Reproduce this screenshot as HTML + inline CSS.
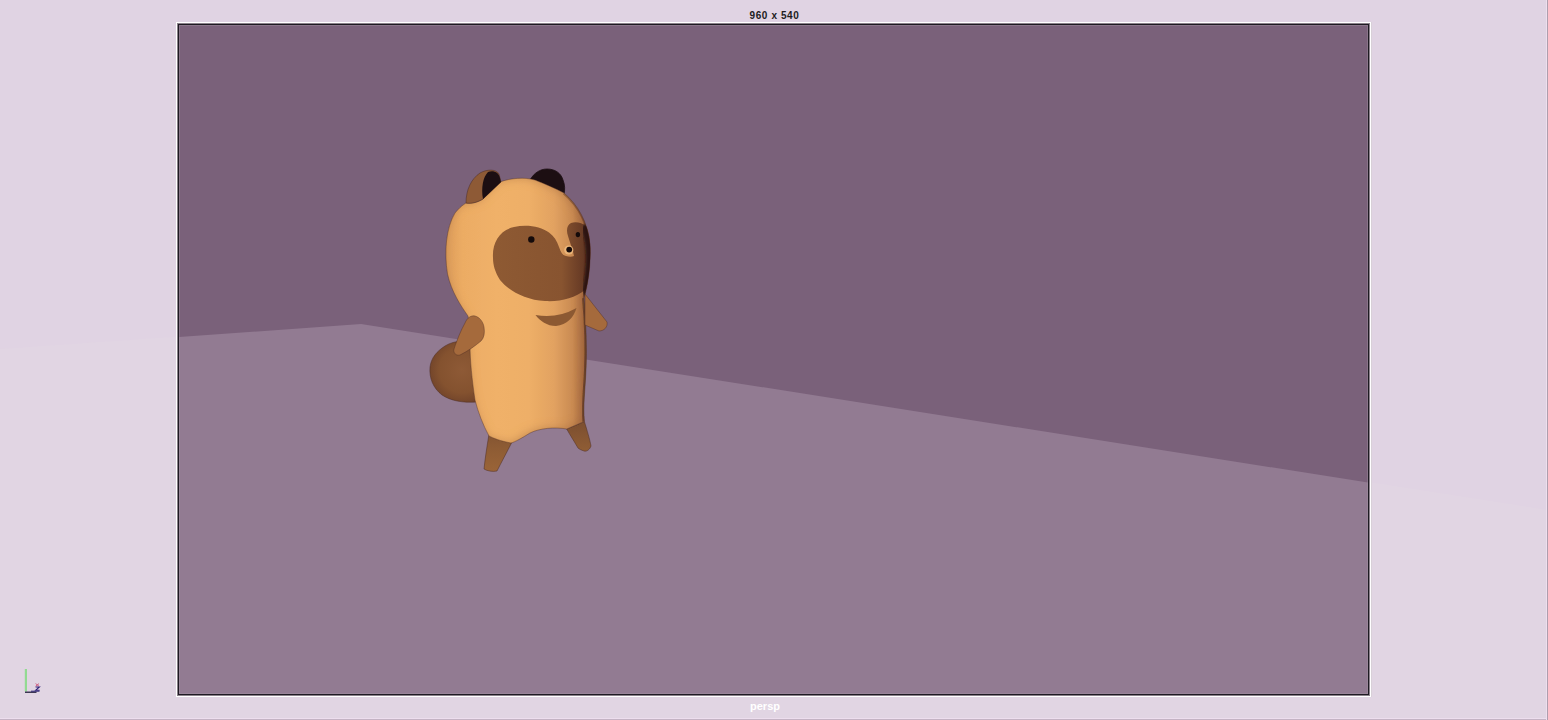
<!DOCTYPE html>
<html>
<head>
<meta charset="utf-8">
<style>
html,body{margin:0;padding:0;width:1548px;height:720px;overflow:hidden;background:#E0D3E3;}
svg{display:block;position:absolute;left:0;top:0;}
.lbl{font-family:"Liberation Sans",sans-serif;font-weight:bold;font-size:11px;}
</style>
</head>
<body>
<svg width="1548" height="720" viewBox="0 0 1548 720">
  <defs>
    <linearGradient id="gSkin" x1="445" y1="0" x2="592" y2="0" gradientUnits="userSpaceOnUse">
      <stop offset="0" stop-color="#DC9C5A"/>
      <stop offset="0.12" stop-color="#ECAC64"/>
      <stop offset="0.35" stop-color="#F0B169"/>
      <stop offset="0.57" stop-color="#EEAF67"/>
      <stop offset="0.74" stop-color="#E2A261"/>
      <stop offset="0.87" stop-color="#C98A52"/>
      <stop offset="0.94" stop-color="#A86C42"/>
      <stop offset="1" stop-color="#7A4630"/>
    </linearGradient>
    <linearGradient id="gPatch" x1="493" y1="0" x2="591" y2="0" gradientUnits="userSpaceOnUse">
      <stop offset="0" stop-color="#8E5A33"/>
      <stop offset="0.7" stop-color="#885430"/>
      <stop offset="1" stop-color="#5A3020"/>
    </linearGradient>
    <radialGradient id="gTail" cx="462" cy="370" r="38" gradientUnits="userSpaceOnUse">
      <stop offset="0" stop-color="#8E5A36"/>
      <stop offset="0.6" stop-color="#84522F"/>
      <stop offset="1" stop-color="#6A3E28"/>
    </radialGradient>
    <filter id="inner" x="-10%" y="-10%" width="120%" height="120%">
      <feGaussianBlur in="SourceAlpha" stdDeviation="5" result="b"/>
      <feOffset in="b" dx="-2" dy="0" result="o"/>
      <feComposite in="SourceAlpha" in2="o" operator="out" result="rim"/>
      <feFlood flood-color="#9A6038" flood-opacity="0.55" result="f"/>
      <feComposite in="f" in2="rim" operator="in" result="shadow"/>
      <feMerge><feMergeNode in="SourceGraphic"/><feMergeNode in="shadow"/></feMerge>
    </filter>
    <clipPath id="clipSil"><path d="M483,199 C490,192 496,186 500,182 C510,178 525,177 535,180 C545,184 555,188 564,193 C578,205 588,222 590,245 C591,265 588,285 584,298 C586,320 587,350 586,370 C585,392 583,405 584.4,421.5 L566.7,429 C555,427 540,428 530,433 C522,438 515,442 511,443 C500,441 493,438 489,436 C483,425 478,412 475,400 C472,380 470,360 470,345 C470,330 469,322 468,316 C461,306 451.5,292 447.5,274 C444,252 446,228 455,213 C460,207 463,205 466,203 C472,204 478,202 483,199 Z"/></clipPath>
    <linearGradient id="gLeg" x1="0" y1="425" x2="0" y2="472" gradientUnits="userSpaceOnUse">
      <stop offset="0" stop-color="#7E5030"/>
      <stop offset="0.5" stop-color="#8E5C34"/>
      <stop offset="1" stop-color="#9A6438"/>
    </linearGradient>
    <filter id="soft" x="-50%" y="-50%" width="200%" height="200%"><feGaussianBlur stdDeviation="1.2"/></filter>
    <filter id="soft2" x="-50%" y="-50%" width="200%" height="200%"><feGaussianBlur stdDeviation="0.6"/></filter>
  </defs>
  <!-- subtle floor continuation outside the viewport -->
  <polygon points="0,349 361,324 1548,510 1548,720 0,720" fill="#E1D5E3"/>
  <!-- window edges -->
  <rect x="0" y="718" width="1548" height="1" fill="#EDDEEE"/>
  <rect x="0" y="719" width="1548" height="1" fill="#C4B3C4"/>
  <rect x="1546" y="0" width="1" height="720" fill="#EEDFEE"/>
  <rect x="1547" y="0" width="1" height="720" fill="#AE9EAE"/>

  <!-- frame -->
  <rect x="176" y="22" width="1195" height="675" fill="#FFFFFF"/>
  <rect x="177" y="23" width="1193" height="673" fill="#8A808A"/>
  <rect x="178" y="24" width="1191" height="671" fill="#1E1A22"/>
  <rect x="179" y="25" width="1189" height="669" fill="#7A617A"/>
  <polygon points="179,337 361,324 1368,482.5 1368,694 179,694" fill="#927B92"/>
  <rect x="179" y="25" width="1188" height="668" fill="none" stroke="#A89CA8" stroke-opacity="0.35" stroke-width="1" transform="translate(0.5 0.5)" style="shape-rendering:crispEdges"/>
  <rect x="1371" y="22" width="1" height="675" fill="#D8D0D8"/>

  <!-- tanuki -->
  <g id="tanuki">
    <!-- tail -->
    <path d="M472,343 C463,340 453,341 445,346 C437,351 431,358 430,367 C429,378 433,388 442,395 C451,401 463,403 477,402 L478,345 Z" fill="url(#gTail)" stroke="#4A2A22" stroke-width="0.8" stroke-opacity="0.6"/>
    <!-- legs -->
    <path d="M489,434 L512,442 C507,452 501,463 497,471 C493,472 487,471 484,469 C485,459 487,446 489,434 Z" fill="url(#gLeg)" stroke="#4A2A22" stroke-width="0.8" stroke-opacity="0.6"/>
    <path d="M566.7,429 L584.4,421.5 C587,430 590,440 591,446 C590,449 587,452 584,451 C581,450 579,449 578,448 C574,441 570,435 566.7,429 Z" fill="url(#gLeg)" stroke="#4A2A22" stroke-width="0.8" stroke-opacity="0.6"/>
    <!-- right ear (behind head top) -->
    <path d="M530,180 C534,173 540,169 547,169 C555,169 561,173 563,180 C565,185 565,190 564,194 C555,190 545,184 530,180 Z" fill="#1C0E12" stroke="#1C0E12" stroke-width="0.8"/>
    <!-- silhouette -->
    <g filter="url(#inner)">
    <path d="M483,199 C490,192 496,186 500,182 C510,178 525,177 535,180 C545,184 555,188 564,193 C578,205 588,222 590,245 C591,265 588,285 584,298 C586,320 587,350 586,370 C585,392 583,405 584.4,421.5 L566.7,429 C555,427 540,428 530,433 C522,438 515,442 511,443 C500,441 493,438 489,436 C483,425 478,412 475,400 C472,380 470,360 470,345 C470,330 469,322 468,316 C461,306 451.5,292 447.5,274 C444,252 446,228 455,213 C460,207 463,205 466,203 C472,204 478,202 483,199 Z" fill="url(#gSkin)"/>
    </g>
    <path d="M483,199 C490,192 496,186 500,182 C510,178 525,177 535,180 C545,184 555,188 564,193 C578,205 588,222 590,245 C591,265 588,285 584,298 C586,320 587,350 586,370 C585,392 583,405 584.4,421.5 L566.7,429 C555,427 540,428 530,433 C522,438 515,442 511,443 C500,441 493,438 489,436 C483,425 478,412 475,400 C472,380 470,360 470,345 C470,330 469,322 468,316 C461,306 451.5,292 447.5,274 C444,252 446,228 455,213 C460,207 463,205 466,203 C472,204 478,202 483,199 Z" fill="none" stroke="#4A2A22" stroke-width="0.8" stroke-opacity="0.5"/>
    <!-- left ear -->
    <path d="M466,203 C466,190 471,179 480,173 C487,169 496,169 499,174 L501,182 L483,199 C478,202 472,204 466,203 Z" fill="#8E5A36" stroke="#4A2A22" stroke-width="0.8" stroke-opacity="0.6"/>
    <path d="M483,199 C481,188 483,177 488,172 C494,170 499,173 500,178 L501,182 Z" fill="#1C0E12"/>
    <!-- eye patch -->
    <path d="M493,258 C492,242 500,230 514,227 C528,224 541,227 549,232.5 C554,236 557,241 559,247 C561,252 562,255 566,256 C569,257 572,257 574,256 C573,250 570,243 568,236 C566,230 567,225 571,223 C576,221 582,223 586,226 C590,234 591,245 590,260 C589,275 587,285 585,290 C575,298 560,302 545,301 C525,300 508,290 500,280 C495,272 493,265 493,258 Z" fill="url(#gPatch)"/>
    <circle cx="568.8" cy="250" r="4.6" fill="#F0BC80" opacity="0.85" filter="url(#soft2)"/>
    <circle cx="531.3" cy="239.5" r="3.2" fill="#140A0A"/>
    <ellipse cx="577.9" cy="234.6" rx="2.2" ry="2.7" fill="#140A0A"/>
    <circle cx="569.2" cy="249.6" r="2.9" fill="#140A0A"/>
    <!-- dark rim on right side of head -->
    <g clip-path="url(#clipSil)">
    <path d="M584,298 C586,320 587,350 586,370 C585,392 583,405 584.4,421.5" fill="none" stroke="#3A1E14" stroke-width="4" stroke-opacity="0.5" filter="url(#soft2)"/>
    <path d="M564,193 C578,205 588,222 590,245 C591,265 588,285 584,298" fill="none" stroke="#3A1E1A" stroke-width="3" stroke-opacity="0.35"/>
    <path d="M586,229 C588,236 590,242 590,252 C591,265 589,278 586.5,291" fill="none" stroke="#24120E" stroke-width="9" stroke-opacity="0.85" stroke-linecap="round" filter="url(#soft)"/>
    </g>
    <!-- mouth -->
    <path d="M535.5,315 Q557,319 576.5,308 C574,317 567,325 556,326 C547,326 540,321 535.5,315 Z" fill="#8C5932"/>
    <!-- left arm -->
    <path d="M465,323 C467,318 471,315 475,316 C479,317 483,321 484,327 C485,333 484,338 481,341 C475,346 468,351 460,355 C456,356 453,353 454,349 C457,340 461,330 465,323 Z" fill="#A56A3C" stroke="#4A2A22" stroke-width="0.8" stroke-opacity="0.5"/>
    <!-- right arm -->
    <path d="M585,294 L607,322 C608,327 604,331 599,331 L585,325 Z" fill="#A56A3C" stroke="#4A2A22" stroke-width="0.8" stroke-opacity="0.5"/>
  </g>

  <!-- axis gizmo -->
  <rect x="24.8" y="669" width="2.2" height="22.5" fill="#92DA92"/>
  <path d="M25,692.2 L36.5,692.2" stroke="#140F30" stroke-width="1.2"/>
  <path d="M31,691.2 L39.5,691.2" stroke="#2A2270" stroke-width="1"/>
  <path d="M35.6,687 L39.4,687 L35.8,690.2 L39.6,690.2" fill="none" stroke="#2C1E78" stroke-width="1.1"/>
  <path d="M35.6,683.6 L39,686.2 M39,683.6 L35.6,686.2" fill="none" stroke="#C8406A" stroke-width="1" stroke-opacity="0.75"/>
  <!-- labels -->
  <text class="lbl" x="774.5" y="19.2" text-anchor="middle" fill="#201C22" style="font-size:10px;letter-spacing:0.6px">960 x 540</text>
  <text class="lbl" x="765" y="710" text-anchor="middle" fill="#FFFFFF">persp</text>
</svg>
</body>
</html>
